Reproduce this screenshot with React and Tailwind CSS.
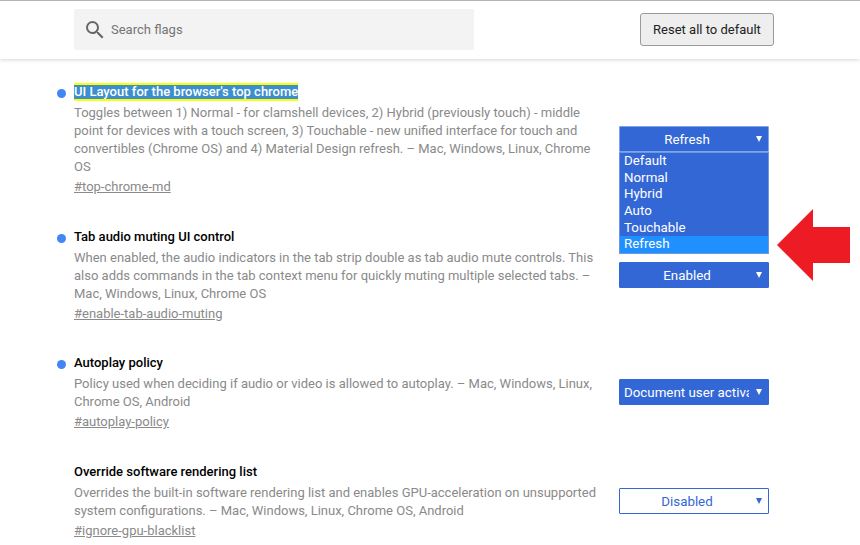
const experiments = [
  {
    title: "UI Layout for the browser's top chrome",
    highlighted: true,
    modified: true,
    desc: "Toggles between 1) Normal - for clamshell devices, 2) Hybrid (previously touch) - middle point for devices with a touch screen, 3) Touchable - new unified interface for touch and convertibles (Chrome OS) and 4) Material Design refresh. – Mac, Windows, Linux, Chrome OS",
    link: "#top-chrome-md",
    value: "Refresh",
    open: true,
  },
  {
    title: "Tab audio muting UI control",
    modified: true,
    desc: "When enabled, the audio indicators in the tab strip double as tab audio mute controls. This also adds commands in the tab context menu for quickly muting multiple selected tabs. – Mac, Windows, Linux, Chrome OS",
    link: "#enable-tab-audio-muting",
    value: "Enabled",
  },
  {
    title: "Autoplay policy",
    modified: true,
    desc: "Policy used when deciding if audio or video is allowed to autoplay. – Mac, Windows, Linux, Chrome OS, Android",
    link: "#autoplay-policy",
    value: "Document user activation required",
    left: true,
  },
  {
    title: "Override software rendering list",
    desc: "Overrides the built-in software rendering list and enables GPU-acceleration on unsupported system configurations. – Mac, Windows, Linux, Chrome OS, Android",
    link: "#ignore-gpu-blacklist",
    value: "Disabled",
    outline: true,
  },
];

const options = ["Default", "Normal", "Hybrid", "Auto", "Touchable", "Refresh"];

const Caret = ({ color }) => (
  <svg width="6" height="6" viewBox="0 0 6 6" className="absolute right-[6px] top-[9px]">
    <path d="M0 0H6L3 6Z" fill={color} />
  </svg>
);

const FlagSelect = ({ item }) => {
  const tone = item.outline
    ? "bg-white text-[#3367d6] border border-[#3367d6]"
    : item.open
    ? "bg-[#3367d6] text-white border border-[#7ea3ea]"
    : "bg-[#3367d6] text-white border border-[#3367d6]";

  return (
    <div className="relative mb-[1px] w-[150px] shrink-0">
      <div className={`relative h-[26px] rounded-[1px] ${tone}`}>
        <div
          className={`h-full overflow-hidden whitespace-nowrap text-[13.33px] leading-[25px] ${
            item.left ? "ml-[4px] w-[125px]" : "w-[134px] text-center"
          }`}
        >
          {item.value}
        </div>
        <Caret color={item.outline ? "#3367d6" : "#ffffff"} />
      </div>
      {item.open && (
        <div className="absolute left-0 top-[26px] z-10 w-[150px] border border-[#6f96e0] bg-[#3367d6] text-[13.33px] leading-[16.67px] text-white">
          {options.map((option) => (
            <div
              key={option}
              className={`pl-[4px] ${option === item.value ? "bg-[#1e90ff]" : ""}`}
            >
              {option}
            </div>
          ))}
        </div>
      )}
    </div>
  );
};

const App = () => {
  return (
    <div
      className="relative h-[545px] w-[860px] overflow-hidden bg-white text-[13px] leading-[18px] text-[#8a8a8a]"
      style={{ fontFamily: "Roboto, sans-serif" }}
    >
      <header className="flex h-[59px] items-center justify-between border-t border-t-[#b4b4b4] pb-[1px] pl-[74px] pr-[86px] shadow-[0_1px_4px_rgba(0,0,0,0.16)]">
        <div className="flex h-[41px] w-[400px] items-center rounded-[2px] bg-[#f3f3f3] pl-[9px]">
          <svg width="24" height="24" viewBox="0 0 24 24" fill="#666666">
            <path d="M15.5 14h-.79l-.28-.27A6.471 6.471 0 0 0 16 9.5 6.5 6.5 0 1 0 9.5 16c1.61 0 3.09-.59 4.23-1.57l.27.28v.79l5 4.99L20.49 19l-4.99-5zm-6 0C7.01 14 5 11.99 5 9.5S7.01 5 9.5 5 14 7.01 14 9.5 11.99 14 9.5 14z" />
          </svg>
          <span className="ml-[4px] text-[13px] text-[#757575]">Search flags</span>
        </div>
        <button className="h-[33px] w-[134px] rounded-[3px] border border-[#9a9a9a] bg-[#eeeeee] text-[13px] text-[#222222]">
          Reset all to default
        </button>
      </header>

      <main className="flex flex-col gap-[31.6px] pl-[57px] pt-[24px]">
        {experiments.map((item) => (
          <section key={item.link} className="flex items-center">
            <div className="flex w-[562px] shrink-0">
              <div className="w-[17px] shrink-0 pt-[6px]">
                {item.modified && <div className="h-[9px] w-[9px] rounded-full bg-[#4285f4]" />}
              </div>
              <div className="w-[524px]">
                <h2 className="font-medium text-black">
                  <span
                    className={
                      item.highlighted
                        ? "inline-block border-y-2 border-y-[#ffff00] bg-[#3b8fce] leading-[14px] text-white"
                        : ""
                    }
                  >
                    {item.title}
                  </span>
                </h2>
                <p className="mt-[3px]">{item.desc}</p>
                <a className="mt-[2px] block underline">{item.link}</a>
              </div>
            </div>
            <FlagSelect item={item} />
          </section>
        ))}
      </main>

      <svg
        width="73"
        height="72"
        viewBox="0 0 73 72"
        className="absolute left-[777px] top-[209px] z-20"
      >
        <path d="M0 36L36 0V18H73V54H36V72Z" fill="#ed1c24" />
      </svg>
    </div>
  );
};

export default App;
